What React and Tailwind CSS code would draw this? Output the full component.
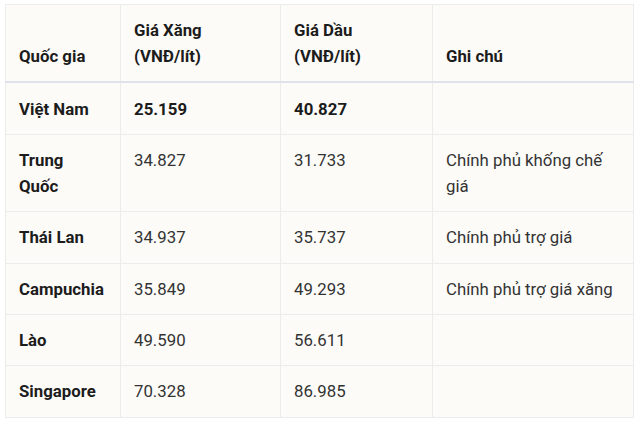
import React from "react"

const rows = [
    { country: "Việt Nam", xang: "25.159", dau: "40.827", note: "", bold: true },
    { country: "Trung Quốc", xang: "34.827", dau: "31.733", note: "Chính phủ khống chế giá" },
    { country: "Thái Lan", xang: "34.937", dau: "35.737", note: "Chính phủ trợ giá" },
    { country: "Campuchia", xang: "35.849", dau: "49.293", note: "Chính phủ trợ giá xăng" },
    { country: "Lào", xang: "49.590", dau: "56.611", note: "" },
    { country: "Singapore", xang: "70.328", dau: "86.985", note: "" },
]

const th = "border-x border-[#ececec] border-b-2 border-b-[#dfe2ea] px-[13px] py-[12.2px] text-left align-bottom font-bold text-[#1c1c1c]"
const td = "border border-[#ececec] px-[13px] py-[12.2px] align-top"

function App() {
    return (
        <div className="min-h-screen bg-white pl-[5px] pt-[4px]" style={{ fontFamily: "Roboto, 'Noto Sans', sans-serif" }}>
            <table className="w-[628px] table-fixed border-collapse border border-[#ececec] bg-[#fcfbf8] text-[16.8px] leading-[26px]">
                <colgroup>
                    <col className="w-[115px]" />
                    <col className="w-[160px]" />
                    <col className="w-[152px]" />
                    <col className="w-[201px]" />
                </colgroup>
                <thead>
                    <tr>
                        <th className={th}>Quốc gia</th>
                        <th className={th}>Giá Xăng<br />(VNĐ/lít)</th>
                        <th className={th}>Giá Dầu<br />(VNĐ/lít)</th>
                        <th className={th}>Ghi chú</th>
                    </tr>
                </thead>
                <tbody>
                    {rows.map((r) => (
                        <tr key={r.country}>
                            <td className={td + " font-bold text-[#1c1c1c]"}>{r.country === "Trung Quốc" ? <>Trung<br />Quốc</> : r.country}</td>
                            <td className={td + (r.bold ? " font-bold text-[#1c1c1c]" : " text-[#333]")}>{r.xang}</td>
                            <td className={td + (r.bold ? " font-bold text-[#1c1c1c]" : " text-[#333]")}>{r.dau}</td>
                            <td className={td + " text-[#333]"}>{r.note}</td>
                        </tr>
                    ))}
                </tbody>
            </table>
        </div>
    )
}

export default App
